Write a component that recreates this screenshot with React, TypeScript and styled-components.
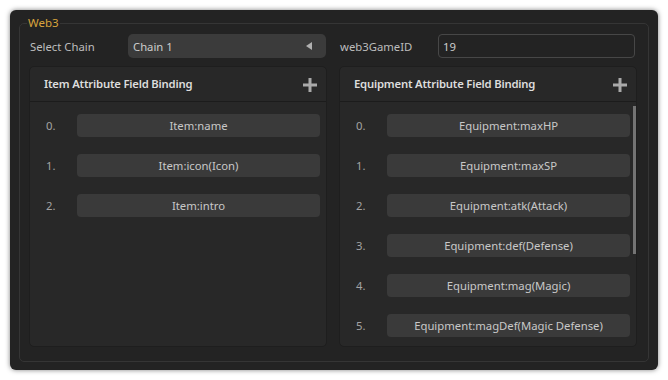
import React from 'react'
import styled, { createGlobalStyle } from 'styled-components'

const GlobalStyle = createGlobalStyle`
  body {
    margin: 0;
    background: #ffffff;
    font-family: "Noto Sans", "Open Sans", sans-serif;
  }
`

const itemFields = ['Item:name', 'Item:icon(Icon)', 'Item:intro']

const equipmentFields = [
  'Equipment:maxHP',
  'Equipment:maxSP',
  'Equipment:atk(Attack)',
  'Equipment:def(Defense)',
  'Equipment:mag(Magic)',
  'Equipment:magDef(Magic Defense)',
]

const PlusIcon = () => (
  <svg width="14" height="14" viewBox="0 0 14 14">
    <rect x="5.5" y="0" width="3" height="14" fill="currentColor" />
    <rect x="0" y="5.5" width="14" height="3" fill="currentColor" />
  </svg>
)

interface BindingPanelProps {
  title: string
  fields: string[]
  thumb?: boolean
}

const BindingPanel = ({ title, fields, thumb }: BindingPanelProps) => (
  <Panel>
    <PanelHeader>
      <Title>{title}</Title>
      <AddButton>
        <PlusIcon />
      </AddButton>
    </PanelHeader>
    <FieldList>
      {fields.map((f, i) => (
        <FieldRow key={f}>
          <Index>{i}.</Index>
          <Chip>{f}</Chip>
        </FieldRow>
      ))}
    </FieldList>
    {thumb ? <ScrollThumb /> : null}
  </Panel>
)

const App = () => (
  <>
    <GlobalStyle />
    <Window>
      <Group>
        <Legend>Web3</Legend>
        <TopRow>
          <Field>
            <Label>Select Chain</Label>
            <Select>
              <span>Chain 1</span>
              <Arrow />
            </Select>
          </Field>
          <Field>
            <Label>web3GameID</Label>
            <Input defaultValue="19" />
          </Field>
        </TopRow>
        <Panels>
          <BindingPanel title="Item Attribute Field Binding" fields={itemFields} />
          <BindingPanel title="Equipment Attribute Field Binding" fields={equipmentFields} thumb />
        </Panels>
      </Group>
    </Window>
  </>
)

const Window = styled.div`
  margin: 10px;
  width: 648px;
  height: 360px;
  box-sizing: border-box;
  background: #232323;
  border-radius: 6px;
  box-shadow: 0 0 5px rgba(0, 0, 0, 0.5);
  padding: 6px 9px 8px 9px;
  display: flex;
`

const Group = styled.fieldset`
  flex: 1;
  min-width: 0;
  margin: 0;
  border: 1px solid #353535;
  border-radius: 5px;
  padding: 4px 11px 14px 9px;
  display: flex;
  flex-direction: column;
  gap: 8px;
`

const Legend = styled.legend`
  color: #d9a43c;
  font-size: 11.5px;
  line-height: 14px;
  padding: 0 1px;
  margin-left: -2px;
`

const TopRow = styled.div`
  display: grid;
  grid-template-columns: 1fr 1fr;
  gap: 12px;
  height: 24px;
`

const Field = styled.div`
  display: flex;
  align-items: center;
  min-width: 0;
`

const Label = styled.span`
  width: 98px;
  padding-left: 1px;
  color: #bdbdbd;
  font-size: 11.3px;
`

const Select = styled.div`
  flex: 1;
  height: 24px;
  box-sizing: border-box;
  margin-right: 1px;
  background: #3b3b3b;
  border-radius: 5px;
  padding: 0 14px 0 5px;
  display: flex;
  align-items: center;
  justify-content: space-between;
  color: #cccccc;
  font-size: 11.3px;
`

const Arrow = styled.span`
  width: 0;
  height: 0;
  border-top: 4px solid transparent;
  border-bottom: 4px solid transparent;
  border-right: 6px solid #b0b0b0;
`

const Input = styled.input`
  flex: 1;
  min-width: 0;
  height: 24px;
  box-sizing: border-box;
  margin: 0 2px 0 0;
  background: transparent;
  border: 1px solid #474747;
  border-radius: 4px;
  padding: 0 4px;
  color: #cccccc;
  font-family: inherit;
  font-size: 11.3px;
  outline: none;
`

const Panels = styled.div`
  flex: 1;
  min-height: 0;
  display: grid;
  grid-template-columns: 1fr 1fr;
  grid-template-rows: minmax(0, 1fr);
  gap: 12px;
`

const Panel = styled.div`
  position: relative;
  background: #282828;
  border: 1px solid #1e1e1e;
  border-radius: 5px;
  display: flex;
  flex-direction: column;
  min-height: 0;
  overflow: hidden;
`

const PanelHeader = styled.div`
  height: 34px;
  flex: none;
  display: flex;
  align-items: center;
  justify-content: space-between;
  padding: 0 9px 0 14px;
  border-bottom: 1px solid #1c1c1c;
`

const Title = styled.span`
  margin-top: -2px;
  color: #dddddd;
  font-size: 11.3px;
  font-weight: 600;
  letter-spacing: -0.2px;
`

const AddButton = styled.span`
  display: flex;
  color: #a9a9a9;
  margin-top: 1px;
`

const FieldList = styled.div`
  flex: 1;
  min-height: 0;
  overflow: hidden;
  padding: 12px 6px 12px 16px;
  display: flex;
  flex-direction: column;
  gap: 17px;
`

const ScrollThumb = styled.div`
  position: absolute;
  right: 0;
  top: 39px;
  width: 3px;
  height: 148px;
  background: #747474;
`

const FieldRow = styled.div`
  display: flex;
  align-items: center;
  height: 23px;
  flex: none;
`

const Index = styled.span`
  width: 31px;
  color: #a3a3a3;
  font-size: 11.3px;
`

const Chip = styled.div`
  flex: 1;
  height: 23px;
  background: #3a3a3a;
  border-radius: 4px;
  display: flex;
  align-items: center;
  justify-content: center;
  color: #c8c8c8;
  font-size: 11.3px;
`

export default App
